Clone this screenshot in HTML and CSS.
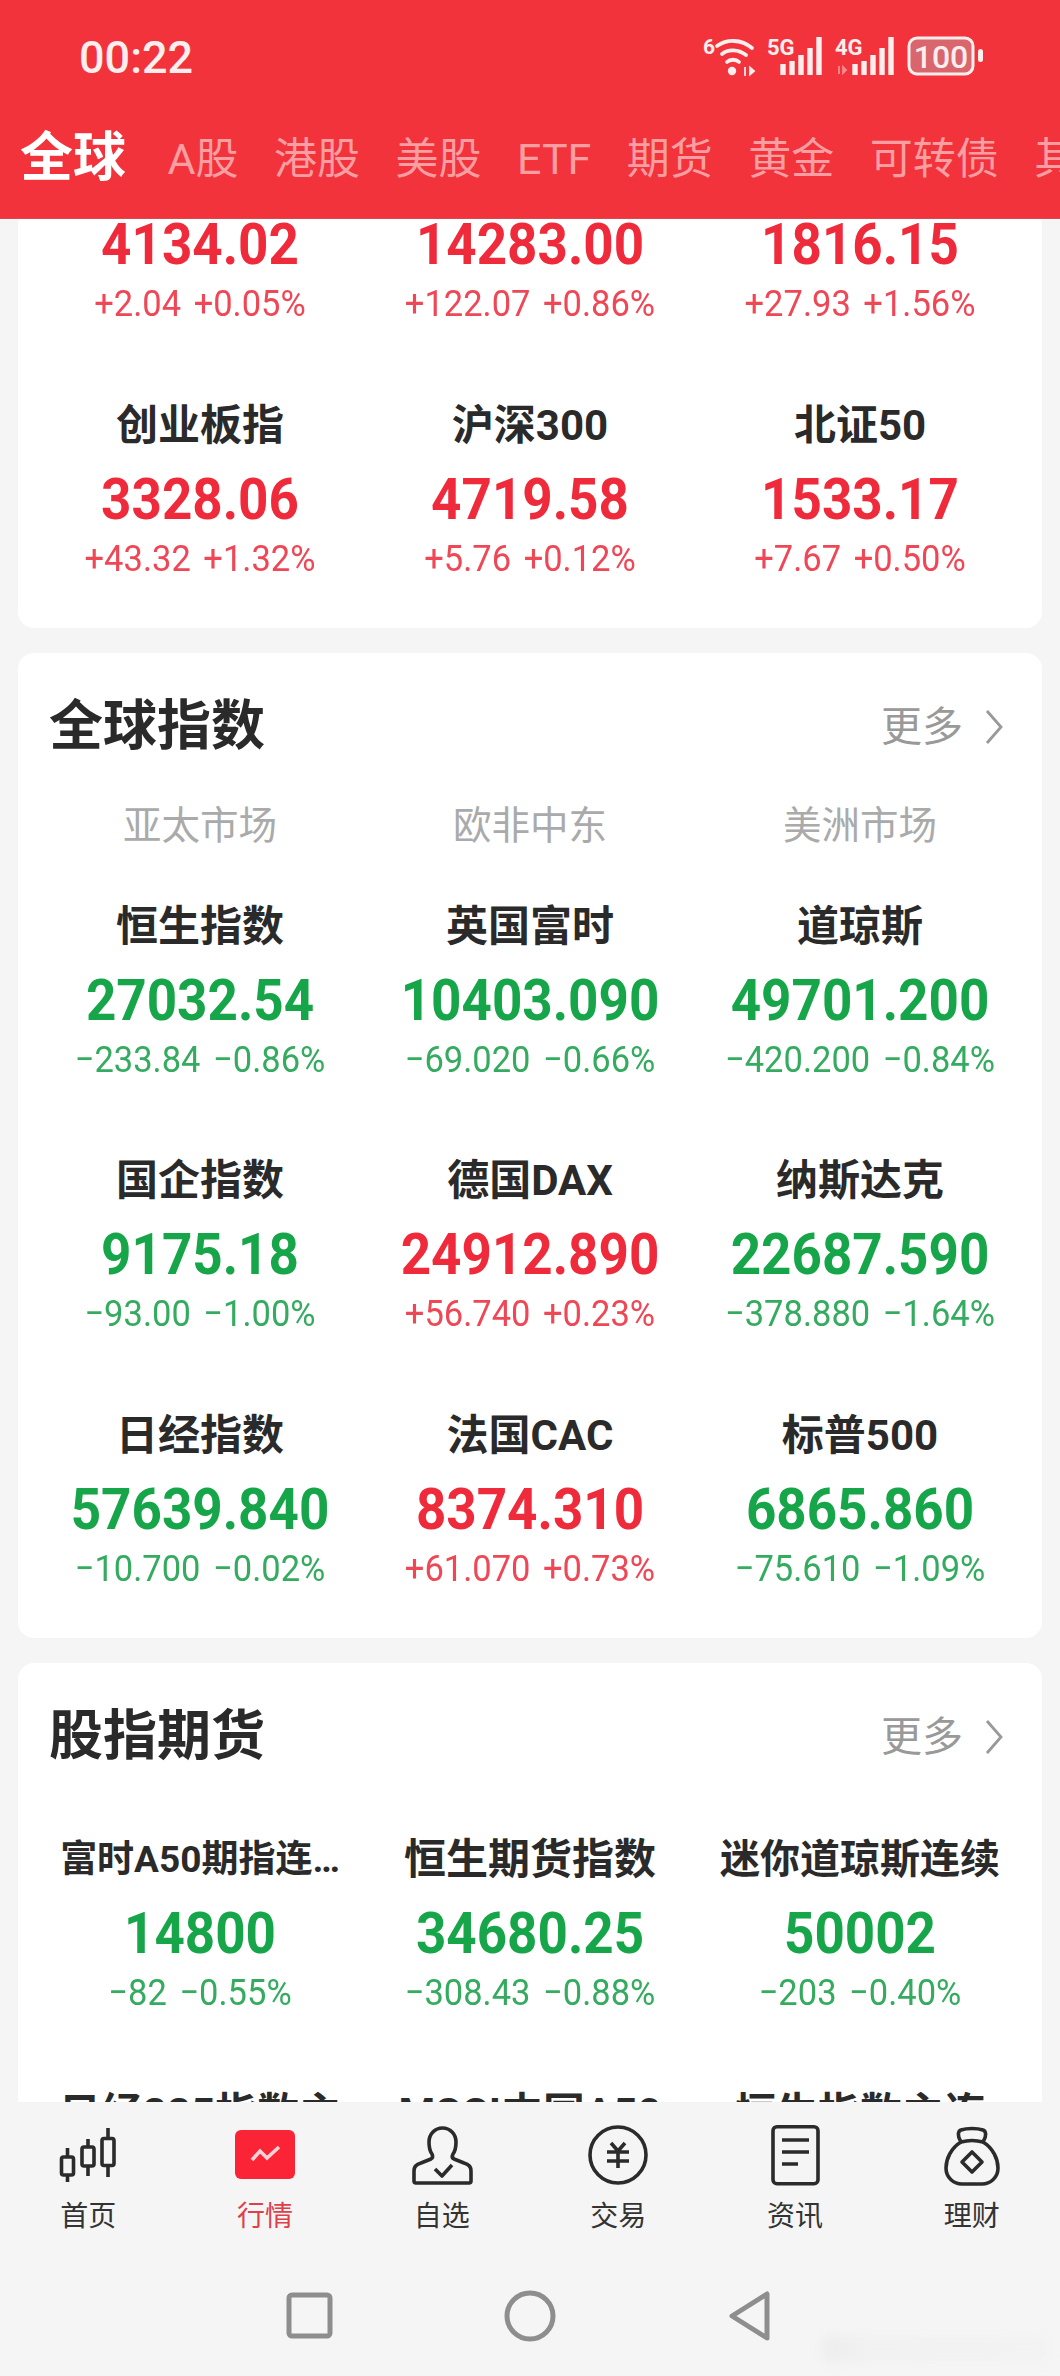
FILE: index.html
```html
<!DOCTYPE html>
<html lang="zh-CN">
<head>
<meta charset="utf-8">
<title>行情</title>
<link rel="stylesheet" href="styles.css">
</head>
<body>
<div class="app">
  <header class="top">
    <div class="status">
      <span class="time">00:22</span>
      <div class="sys">
        <svg class="i-wifi" width="54" height="42" viewBox="0 0 54 42">
          <text x="0" y="18" class="st-t" font-size="21">6</text>
          <path d="M14 10c10-7 24-7 35 2M19 18c6-5 16-5 24 1M24 26c3-3 9-3 12 0" class="st-l" stroke-width="3.800"/>
          <circle cx="29" cy="35" r="4.200" fill="#fdeeee"/>
          <path d="M42 31v9M51 35l-4 3.500v-7z" stroke="#fdeeee" stroke-width="1.800" fill="#fdeeee"/>
        </svg>
        <svg class="i-sig" width="58" height="40" viewBox="0 0 58 40">
          <text x="0" y="19" class="st-t" font-size="22">5G</text>
          <path d="M16 39V28M25 39V25M34 39V19M43 39V12M52 39V1" class="st-l st-b" stroke-width="5.400"/>
        </svg>
        <svg class="i-sig" width="62" height="40" viewBox="0 0 62 40">
          <text x="0" y="19" class="st-t" font-size="22">4G</text>
          <path d="M4 30v8M11 34l-3 3v-6z" stroke="#f78a8e" stroke-width="1.800" fill="#f78a8e"/>
          <path d="M20 39V28M29 39V25M38 39V19M47 39V12M56 39V1" class="st-l st-b" stroke-width="5.400"/>
        </svg>
        <svg class="i-bat" width="78" height="40" viewBox="0 0 78 40">
          <rect x="2" y="2" width="64" height="36" rx="8" fill="#d9666c" stroke="#fdeeee" stroke-width="3"/>
          <text x="34" y="31.500" class="st-c" font-size="32">100</text>
          <rect x="71" y="13" width="5" height="13" rx="2.500" fill="#fdeeee"/>
        </svg>
      </div>
    </div>
    <nav class="tabs">
      <span class="tab on">全球</span>
      <span class="tab">A股</span>
      <span class="tab">港股</span>
      <span class="tab">美股</span>
      <span class="tab">ETF</span>
      <span class="tab">期货</span>
      <span class="tab">黄金</span>
      <span class="tab">可转债</span>
      <span class="tab">其他</span>
    </nav>
  </header>

  <main class="scroll">
    <section class="card">
      <div class="grid">
        <div class="cell up"><div class="val">4134.02</div><div class="chg">+2.04 +0.05%</div></div>
        <div class="cell up"><div class="val">14283.00</div><div class="chg">+122.07 +0.86%</div></div>
        <div class="cell up"><div class="val">1816.15</div><div class="chg">+27.93 +1.56%</div></div>
        <div class="cell up"><div class="name">创业板指</div><div class="val">3328.06</div><div class="chg">+43.32 +1.32%</div></div>
        <div class="cell up"><div class="name">沪深300</div><div class="val">4719.58</div><div class="chg">+5.76 +0.12%</div></div>
        <div class="cell up"><div class="name">北证50</div><div class="val">1533.17</div><div class="chg">+7.67 +0.50%</div></div>
      </div>
    </section>

    <section class="card">
      <div class="head">
        <h2>全球指数</h2>
        <span class="more">更多<svg width="18" height="36" viewBox="0 0 18 36"><path d="M2 2l14 16L2 34" fill="none" stroke="#999" stroke-width="2.800"/></svg></span>
      </div>
      <div class="subs"><span>亚太市场</span><span>欧非中东</span><span>美洲市场</span></div>
      <div class="grid">
        <div class="cell down"><div class="name">恒生指数</div><div class="val">27032.54</div><div class="chg">−233.84 −0.86%</div></div>
        <div class="cell down"><div class="name">英国富时</div><div class="val">10403.090</div><div class="chg">−69.020 −0.66%</div></div>
        <div class="cell down"><div class="name">道琼斯</div><div class="val">49701.200</div><div class="chg">−420.200 −0.84%</div></div>
        <div class="cell down"><div class="name">国企指数</div><div class="val">9175.18</div><div class="chg">−93.00 −1.00%</div></div>
        <div class="cell up"><div class="name">德国DAX</div><div class="val">24912.890</div><div class="chg">+56.740 +0.23%</div></div>
        <div class="cell down"><div class="name">纳斯达克</div><div class="val">22687.590</div><div class="chg">−378.880 −1.64%</div></div>
        <div class="cell down"><div class="name">日经指数</div><div class="val">57639.840</div><div class="chg">−10.700 −0.02%</div></div>
        <div class="cell up"><div class="name">法国CAC</div><div class="val">8374.310</div><div class="chg">+61.070 +0.73%</div></div>
        <div class="cell down"><div class="name">标普500</div><div class="val">6865.860</div><div class="chg">−75.610 −1.09%</div></div>
      </div>
    </section>

    <section class="card">
      <div class="head">
        <h2>股指期货</h2>
        <span class="more">更多<svg width="18" height="36" viewBox="0 0 18 36"><path d="M2 2l14 16L2 34" fill="none" stroke="#999" stroke-width="2.800"/></svg></span>
      </div>
      <div class="grid futures">
        <div class="cell down"><div class="name small">富时A50期指连…</div><div class="val">14800</div><div class="chg">−82 −0.55%</div></div>
        <div class="cell down"><div class="name">恒生期货指数</div><div class="val">34680.25</div><div class="chg">−308.43 −0.88%</div></div>
        <div class="cell down"><div class="name fit">迷你道琼斯连续</div><div class="val">50002</div><div class="chg">−203 −0.40%</div></div>
        <div class="cell"><div class="name">日经225指数主</div></div>
        <div class="cell"><div class="name">MSCI中国A50</div></div>
        <div class="cell"><div class="name">恒生指数主连</div></div>
      </div>
    </section>
  </main>

  <footer class="foot">
    <div class="bar">
      <div class="item">
        <svg width="64" height="64" viewBox="0 0 64 64" class="ic">
          <rect x="5.500" y="34" width="12" height="18" rx="2"/><path d="M11.500 25v9M11.500 52v7"/>
          <rect x="26" y="24" width="12" height="19" rx="2"/><path d="M32 16v8M32 43v10"/>
          <rect x="46" y="15.500" width="12" height="27" rx="2"/><path d="M52 5v10.500M52 42.500v11.500"/>
        </svg>
        <span>首页</span>
      </div>
      <div class="item active">
        <svg width="64" height="64" viewBox="0 0 64 64">
          <rect x="2" y="7" width="60" height="49" rx="6" fill="#fb2336"/>
          <path d="M19 37l8-9 7 7 12-11" fill="none" stroke="#ffd3d6" stroke-width="3.600"/>
        </svg>
        <span>行情</span>
      </div>
      <div class="item">
        <svg width="64" height="64" viewBox="0 0 64 64" class="ic">
          <path d="M6 60h53a2 2 0 0 0 2-2V48c0-4-3-7-7-8l-10-4c-2-1-2-3-1-5 3-4 3-8 3-12 0-8-6-14-13.500-14S19 11 19 19c0 4 0 8 3 12 1 2 1 4-1 5l-10 4c-4 1-7 4-7 8v10a2 2 0 0 0 2 2z"/>
          <path d="M25 46l7 7 10-11"/>
        </svg>
        <span>自选</span>
      </div>
      <div class="item">
        <svg width="64" height="64" viewBox="0 0 64 64" class="ic">
          <circle cx="32" cy="32" r="28"/>
          <path d="M25 20l7 8 7-8M21 29h22M21 38h22M32 28v17"/>
        </svg>
        <span>交易</span>
      </div>
      <div class="item">
        <svg width="64" height="64" viewBox="0 0 64 64" class="ic">
          <rect x="10" y="3.700" width="45" height="57" rx="4"/>
          <path d="M19 17h27M19 29h27M19 41h16"/>
        </svg>
        <span>资讯</span>
      </div>
      <div class="item">
        <svg width="64" height="64" viewBox="0 0 64 64" class="ic">
          <path d="M21 19c-4-6-3-11 0-12 6-2 16-2 22 0 3 1 4 6 0 12-7-2-15-2-22 0z"/>
          <path d="M21 19C11 25 6 36 6 45c0 10 8 16 16 16h20c8 0 16-6 16-16 0-9-5-20-15-26"/>
          <path d="M32 29l10 10-10 10-10-10z"/>
        </svg>
        <span>理财</span>
      </div>
    </div>
    <div class="sysnav">
      <svg width="60" height="64" viewBox="0 0 60 64"><rect x="9" y="11" width="41" height="41" rx="3"/></svg>
      <svg width="60" height="64" viewBox="0 0 60 64"><circle cx="30" cy="32" r="23"/></svg>
      <svg width="60" height="64" viewBox="0 0 60 64"><path d="M47 10v44L12 32z"/></svg>
    </div>
    <div class="smudge"></div>
  </footer>
</div>
</body>
</html>
```
FILE: styles.css
```css
* { box-sizing: border-box; }
html, body { margin: 0; padding: 0; }
body {
  width: 1060px;
  height: 2376px;
  overflow: hidden;
  background: #f5f5f5;
  font-family: Roboto, "Noto Sans CJK SC", sans-serif;
}
.app { height: 2376px; display: flex; flex-direction: column; }

.top {
  position: relative;
  z-index: 2;
  height: 219px;
  flex: none;
  background: #f2333b;
  border-bottom: 1px solid #d94a50;
}
.status {
  height: 116px;
  padding: 36px 75px 0 79px;
  display: flex;
  justify-content: space-between;
  align-items: flex-start;
}
.time {
  font-size: 45px;
  line-height: 44px;
  font-weight: 500;
  color: #fdeeee;
}
.sys { display: flex; align-items: flex-start; gap: 10px; margin-left: auto; }
.st-t { font-family: Roboto, sans-serif; font-weight: 700; fill: #fdeeee; }
.st-c { font-family: Roboto, sans-serif; font-weight: 500; fill: #fdeeee; text-anchor: middle; }
.st-l { fill: none; stroke: #fdeeee; stroke-linecap: round; }
.st-b { stroke-linecap: butt; }

.tabs {
  display: flex;
  align-items: center;
  gap: 35.500px;
  height: 86px;
  padding-left: 20px;
  white-space: nowrap;
  overflow: hidden;
}
.tab { font-size: 43px; line-height: 60px; color: #fa9ea2; }
.tab.on { font-size: 53px; font-weight: 700; color: #fff; margin-right: 6px; margin-top: -3px; }

.scroll {
  flex: 1;
  min-height: 0;
  margin-top: -10px;
  padding: 0 18px;
  overflow: hidden;
  display: flex;
  flex-direction: column;
  gap: 25px;
}
.card {
  flex: none;
  background: #fff;
  border-radius: 16px;
  padding: 0 17px 48px;
}
.head {
  padding: 38px 15px 0 14px;
  display: flex;
  justify-content: space-between;
  align-items: center;
  height: 110px;
}
.head h2 { margin: 0; font-size: 54px; line-height: 74px; font-weight: 700; color: #2a2a2a; }
.more {
  display: flex;
  align-items: center;
  gap: 22px;
  font-size: 41px;
  line-height: 74px;
  color: #999;
  padding-right: 7px;
}
.subs {
  margin: 33px 0 41px;
  display: grid;
  grid-template-columns: repeat(3, 1fr);
  text-align: center;
  font-size: 38.500px;
  line-height: 60px;
  color: #aaa;
}
.grid {
  display: grid;
  grid-template-columns: repeat(3, 1fr);
  row-gap: 70.500px;
}
.futures { margin-top: 57px; }
.cell { text-align: center; white-space: nowrap; }
.name {
  font-size: 42px;
  line-height: 60px;
  margin-bottom: 8px;
  font-weight: 700;
  color: #2a2a2a;
}
.name.small { font-size: 37px; }
.name.fit { font-size: 40px; }
.val {
  font-size: 53px;
  line-height: 72px;
  font-weight: 700;
  transform: scaleY(1.08);
}
.chg {
  font-size: 34.500px;
  line-height: 44px;
  word-spacing: 4px;
  transform: scaleY(1.08);
}
.up .val { color: #ee2a3b; }
.up .chg { color: #ef4756; }
.down .val { color: #17a54a; }
.down .chg { color: #35ab60; }

.foot { flex: none; height: 274px; background: #f5f5f5; position: relative; z-index: 1; }
.bar { display: grid; grid-template-columns: repeat(6, 1fr); padding-top: 21px; }
.item { display: flex; flex-direction: column; align-items: center; gap: 12px; font-size: 28px; line-height: 36px; color: #333; }
.item svg { display: block; }
.item.active { color: #df3f4a; }
.ic { fill: none; stroke: #2b2b2b; stroke-width: 3.600; stroke-linejoin: round; }
.sysnav { margin-top: 49px; display: flex; justify-content: center; gap: 160px; }
.sysnav svg { fill: none; stroke: #8e8e8e; stroke-width: 5; stroke-linejoin: round; }
.smudge {
  position: absolute;
  right: 12px;
  bottom: 14px;
  width: 225px;
  height: 26px;
  background: linear-gradient(90deg, #e4e4e4 0, #eeeeee 20%, #f0f0f0 100%);
  filter: blur(6px);
  opacity: 0.5;
}
```
